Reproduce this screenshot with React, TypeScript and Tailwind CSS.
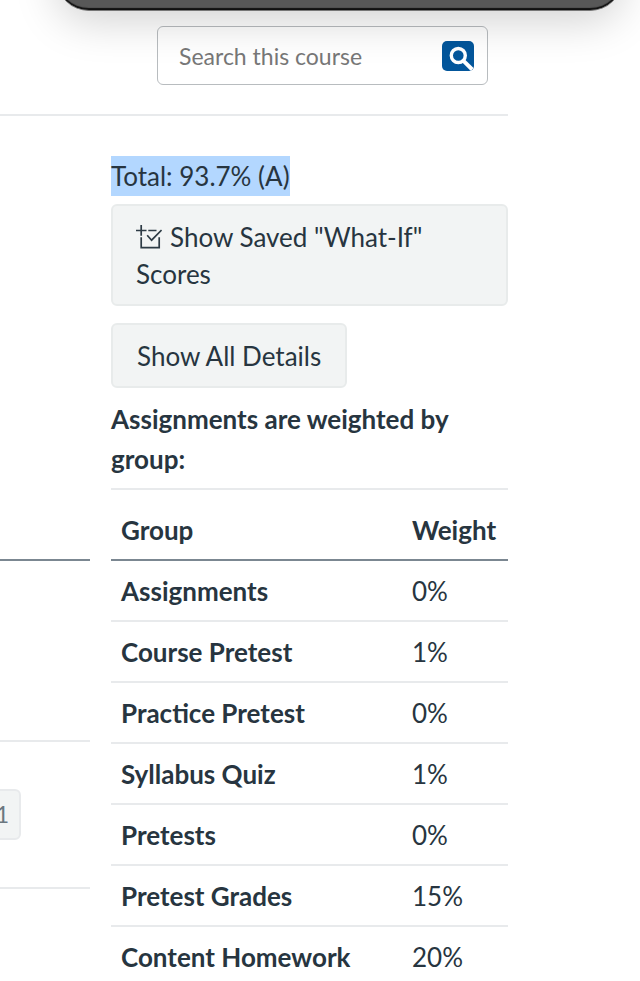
const weights: [string, string][] = [
  ["Assignments", "0%"],
  ["Course Pretest", "1%"],
  ["Practice Pretest", "0%"],
  ["Syllabus Quiz", "1%"],
  ["Pretests", "0%"],
  ["Pretest Grades", "15%"],
  ["Content Homework", "20%"],
];

function WindowEdge() {
  return (
    <div
      aria-hidden="true"
      className="pointer-events-none absolute -top-20 left-[57px] right-[18px] h-[91px] rounded-[32px] border-b border-[#777777] bg-[#585858] shadow-[inset_0_-2px_1px_#111111,0_10px_44px_rgba(0,0,0,0.18)]"
    />
  );
}

function Search() {
  return (
    <form
      role="search"
      onSubmit={(e) => e.preventDefault()}
      className="mr-5 flex h-[59px] w-[331px] items-center rounded-md border border-[#b8bcbf] pr-[13px] pl-[21px]"
    >
      <input
        id="course-search"
        type="text"
        aria-label="Search this course"
        placeholder="Search this course"
        className="h-full min-w-0 flex-1 bg-transparent text-[23px] outline-none placeholder:text-[#777777]"
      />
      <button type="submit" aria-label="Search" className="h-[30px] w-8 overflow-hidden rounded-[5px] bg-[#03569b]">
        <svg viewBox="0 0 32 30" className="h-full w-full" fill="none" stroke="#ffffff">
          <circle cx="16.3" cy="14.5" r="7" strokeWidth="3.4" />
          <path d="M21 19.3 L30.2 28.5" strokeWidth="4" />
        </svg>
      </button>
    </form>
  );
}

function WhatIfIcon() {
  return (
    <svg viewBox="0 0 26 24" className="mr-2 inline-block h-6 w-[26px] align-[-2px]" fill="none" stroke="#2d3b45" strokeWidth="1.7" aria-hidden="true">
      <path d="M0 5.5H10.5M5.2 0V10.8M12.3 5.5H20.5M5.2 12.3V22.6H23.2V12.3M11.2 10.3L15.6 15.2L25.6 5" />
    </svg>
  );
}

export default function App() {
  return (
    <div className="relative h-screen overflow-hidden bg-white pr-[132px] font-[Lato,sans-serif] text-[26px] text-[#273540]">
      <header className="flex justify-end border-b-2 border-[#e8eaec] pt-[26px] pb-[29px]">
        <Search />
      </header>

      <div className="flex gap-[21px]">
        <main className="min-w-0 flex-1">
          <div className="h-[445px] border-b-2 border-[#7b8791]" />
          <div className="h-[181px] border-b-2 border-[#e8eaec]" />
          <div className="flex h-[147px] items-center border-b-2 border-[#e8eaec]">
            <span className="-ml-5 flex h-[51px] w-[41px] items-center justify-end rounded-md border-2 border-[#e8eaec] bg-[#f2f4f4] pr-[10px] text-[23px] text-[#6b7780]">
              1
            </span>
          </div>
        </main>

        <aside className="w-[397px] pt-10">
          <div className="mb-2 flex leading-10">
            <span className="bg-[#b3d7ff]">Total: 93.7% (A)</span>
          </div>
          <button type="button" className="mb-[17px] block w-full rounded-md border-2 border-[#e8ebeb] bg-[#f2f4f4] px-[23px] pt-[13px] pb-[11px] text-left leading-[37px]">
            <WhatIfIcon />
            Show Saved "What-If" Scores
          </button>
          <button type="button" className="mb-[11px] block rounded-md border-2 border-[#e8ebeb] bg-[#f2f4f4] px-6 pt-[13px] pb-[11px] leading-[37px]">
            Show All Details
          </button>
          <h2 className="mb-[9px] font-bold leading-10">Assignments are weighted by group:</h2>
          <table className="w-full border-collapse border-t-2 border-[#e8eaec] text-left">
            <thead>
              <tr className="h-[71px] border-b-2 border-[#7b8791]">
                <th scope="col" className="px-[10px] pt-[10px] font-bold leading-10">Group</th>
                <th scope="col" className="w-[106px] px-[10px] pt-[10px] font-bold leading-10">Weight</th>
              </tr>
            </thead>
            <tbody>
              {weights.map(([group, weight]) => (
                <tr key={group} className="h-[61px] border-b-2 border-[#e8eaec]">
                  <th scope="row" className="px-[10px] font-bold leading-10">{group}</th>
                  <td className="px-[10px] leading-10">{weight}</td>
                </tr>
              ))}
            </tbody>
          </table>
        </aside>
      </div>

      <WindowEdge />
    </div>
  );
}
